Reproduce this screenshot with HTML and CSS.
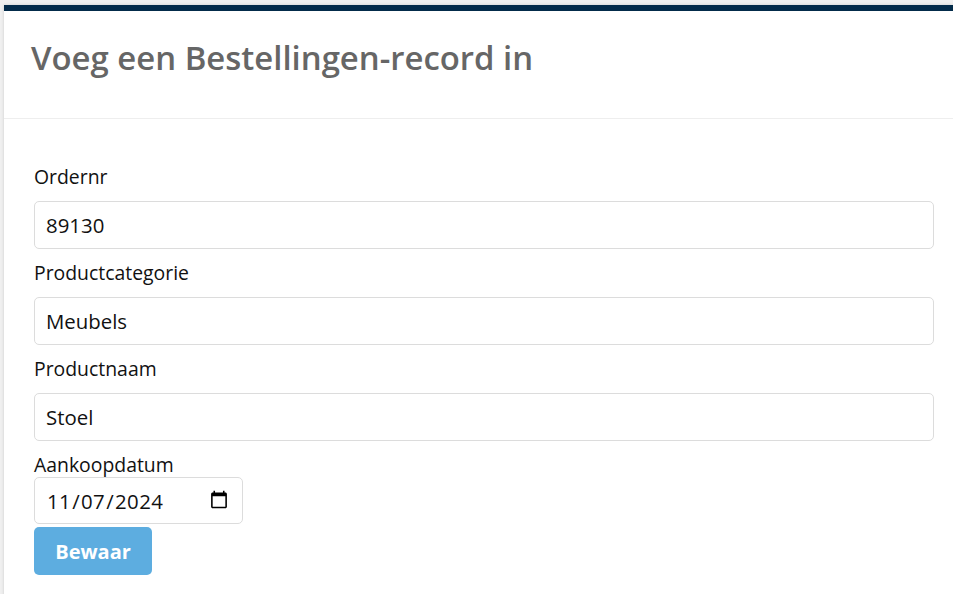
FILE: index.html
```html
<!DOCTYPE html>
<html lang="nl">
<head>
<meta charset="utf-8">
<title>Voeg een Bestellingen-record in</title>
<link rel="stylesheet" href="styles.css">
</head>
<body>
<div class="card">
  <div class="card-header">
    <h1 class="title">Voeg een Bestellingen-record in</h1>
  </div>
  <form class="card-body">
    <div class="field">
      <label class="label" for="ordernr">Ordernr</label>
      <input class="input" id="ordernr" type="text" value="89130">
    </div>
    <div class="field">
      <label class="label" for="cat">Productcategorie</label>
      <input class="input" id="cat" type="text" value="Meubels">
    </div>
    <div class="field">
      <label class="label" for="naam">Productnaam</label>
      <input class="input" id="naam" type="text" value="Stoel">
    </div>
    <div class="field field-date">
      <label class="label" for="datum">Aankoopdatum</label>
      <input class="input input-date" id="datum" type="date" value="2024-11-07">
    </div>
    <button class="btn" type="button">Bewaar</button>
  </form>
</div>
</body>
</html>
```

FILE: styles.css
```css
html, body {
  margin: 0;
  padding: 0;
}
body {
  background: #f0f0f0;
  padding: 5px 0 0 4px;
  font-family: "Open Sans", "Noto Sans", sans-serif;
  color: #111;
  height: 589px;
  overflow: hidden;
}
.card {
  background: #fff;
  border-top: 6px solid #032b4a;
  box-shadow: 0 0 3px rgba(0,0,0,0.15);
  min-height: 600px;
}
.card-header {
  height: 108px;
  display: flex;
  align-items: center;
  padding: 0 27px;
  border-bottom: 1px solid #eeeeee;
  box-sizing: border-box;
}
.title {
  margin: 0;
  font-size: 32.9px;
  font-weight: 600;
  color: #666666;
  line-height: 40px;
  position: relative;
  top: -7px;
}
.card-body {
  padding: 46px 19px 0 30px;
  display: flex;
  flex-direction: column;
}
.field {
  display: flex;
  flex-direction: column;
  gap: 12px;
  margin-bottom: 12px;
}
.field-date {
  gap: 0;
  margin-bottom: 3px;
}
.label {
  font-size: 19.4px;
  line-height: 24px;
  color: #111;
}
.input {
  height: 48px;
  box-sizing: border-box;
  border: 1px solid #dcdcdc;
  border-radius: 5px;
  padding: 0 11px;
  font-family: "Open Sans", "Noto Sans", sans-serif;
  font-size: 20.4px;
  color: #111;
  background: #fff;
  margin: 0;
}
.input-date {
  width: 209px;
  height: 47px;
  letter-spacing: 0.4px;
}
.btn {
  align-self: flex-start;
  width: 118px;
  height: 48px;
  border: none;
  border-radius: 5px;
  background: #5dade0;
  color: #fff;
  font-family: "Open Sans", "Noto Sans", sans-serif;
  font-weight: 700;
  font-size: 20px;
  padding: 0;
}
```
